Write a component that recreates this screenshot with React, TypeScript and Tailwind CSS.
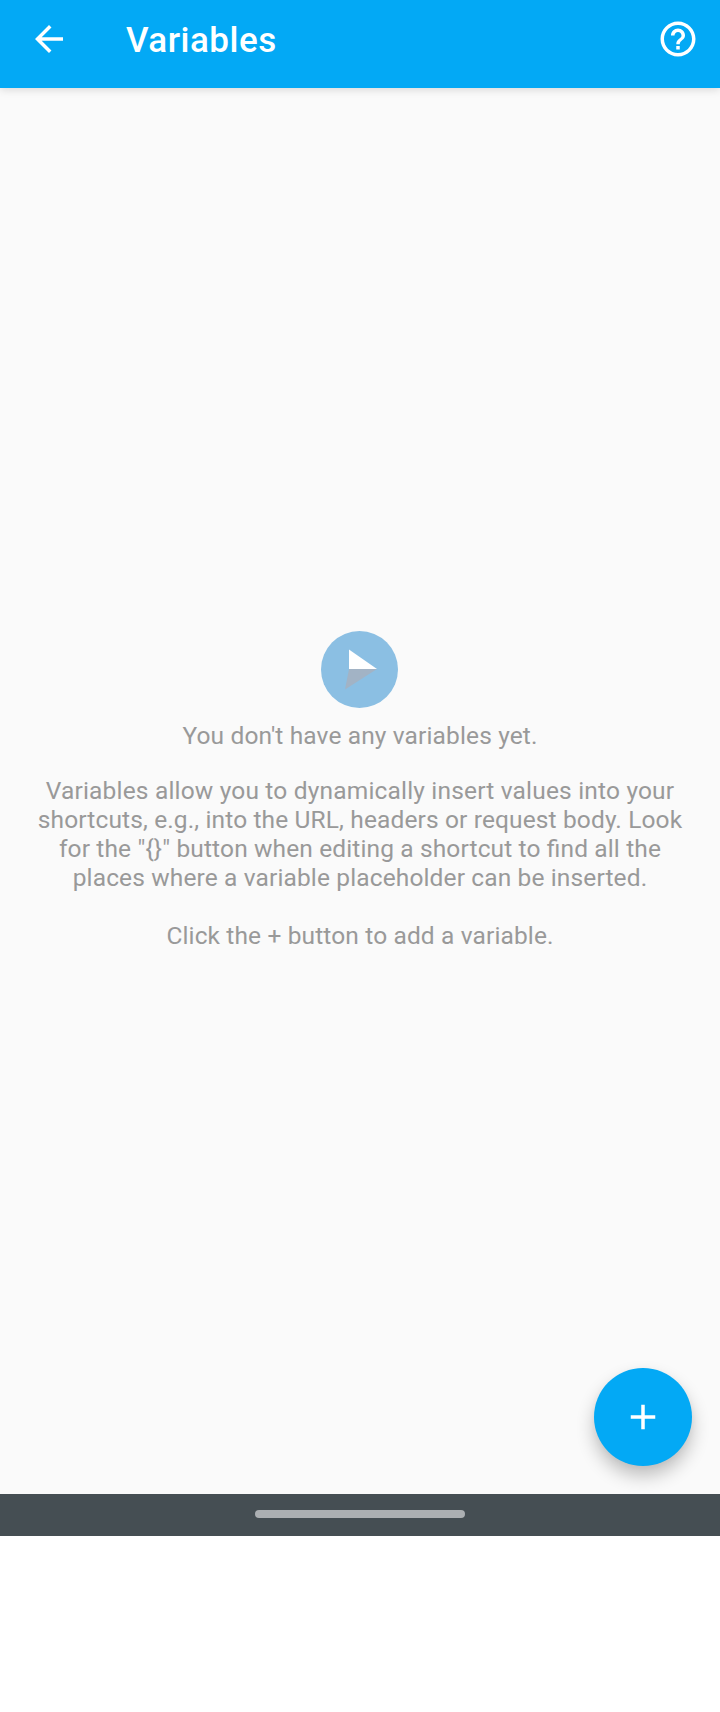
import React from "react";

function Header() {
  return (
    <header className="relative z-10 flex h-[88px] shrink-0 items-start bg-[#03a9f5] pl-7 pr-[21px] pt-[18px] text-white shadow-[0_2px_8px_rgba(0,0,0,0.13)]">
      <button aria-label="Back" className="size-[42px]">
        <svg viewBox="0 0 24 24" className="size-[42px]" fill="currentColor">
          <path d="M20 11H7.83l5.59-5.59L12 4l-8 8 8 8 1.41-1.41L7.83 13H20v-2z" />
        </svg>
      </button>
      <h1 className="ml-14 flex-1 pt-[2px] text-[35px] font-medium leading-[42px] tracking-[0.5px]">Variables</h1>
      <button aria-label="Help" className="size-[42px]">
        <svg viewBox="0 0 24 24" className="size-[42px]" fill="currentColor">
          <path d="M11 18h2v-2h-2v2zm1-16C6.48 2 2 6.48 2 12s4.48 10 10 10 10-4.48 10-10S17.52 2 12 2zm0 18c-4.41 0-8-3.59-8-8s3.59-8 8-8 8 3.59 8 8-3.59 8-8 8zm0-14c-2.21 0-4 1.79-4 4h2c0-1.1.9-2 2-2s2 .9 2 2c0 2-3 1.75-3 5h2c0-2.25 3-2.5 3-5 0-2.21-1.79-4-4-4z" />
        </svg>
      </button>
    </header>
  );
}

function EmptyState() {
  return (
    <section className="flex flex-col items-center pt-[543px] text-center text-[24.5px] leading-[29px] tracking-[0.13px] text-[#999999] [font-feature-settings:'liga'_1]">
      <svg viewBox="0 0 77 77" className="-ml-px size-[77px]">
        <circle cx="38.5" cy="38.5" r="38.5" fill="#8bbfe3" />
        <path d="M28 18.5 56 38H28z" fill="#fff" />
        <path d="M28 38H56L24 58.5z" fill="#a2b3c5" />
      </svg>
      <p className="mt-[13px]">You don't have any variables yet.</p>
      <p className="mt-[26px] whitespace-nowrap">
        <span className="tracking-[0.18px]">Variables allow you to dynamically insert values into your</span>
        <br />
        shortcuts, e.g., into the URL, headers or request body. Look
        <br />
        for the "{"{}"}" button when editing a shortcut to find all the
        <br />
        places where a variable placeholder can be inserted.
      </p>
      <p className="mt-[29px]">Click the + button to add a variable.</p>
    </section>
  );
}

export default function App() {
  return (
    <div className="h-[1712px] w-[720px] overflow-hidden bg-white font-['Roboto',sans-serif]">
      <div className="flex h-[1536px] flex-col">
        <Header />
        <main className="relative flex-1 overflow-hidden bg-[#fafafa]">
          <EmptyState />
          <button
            aria-label="Add variable"
            className="absolute bottom-7 right-7 flex size-[98px] items-center justify-center rounded-full bg-[#03a9f5] text-white shadow-[0_10px_18px_rgba(0,0,0,0.24),0_2px_6px_rgba(0,0,0,0.04)]"
          >
            <svg viewBox="0 0 24 24" className="size-[42px]" fill="currentColor">
              <path d="M19 13h-6v6h-2v-6H5v-2h6V5h2v6h6v2z" />
            </svg>
          </button>
        </main>
        <footer className="flex h-[42px] shrink-0 justify-center bg-[#454e53] pt-4">
          <div className="h-2 w-[210px] rounded-full bg-[#abafb2]" />
        </footer>
      </div>
    </div>
  );
}
